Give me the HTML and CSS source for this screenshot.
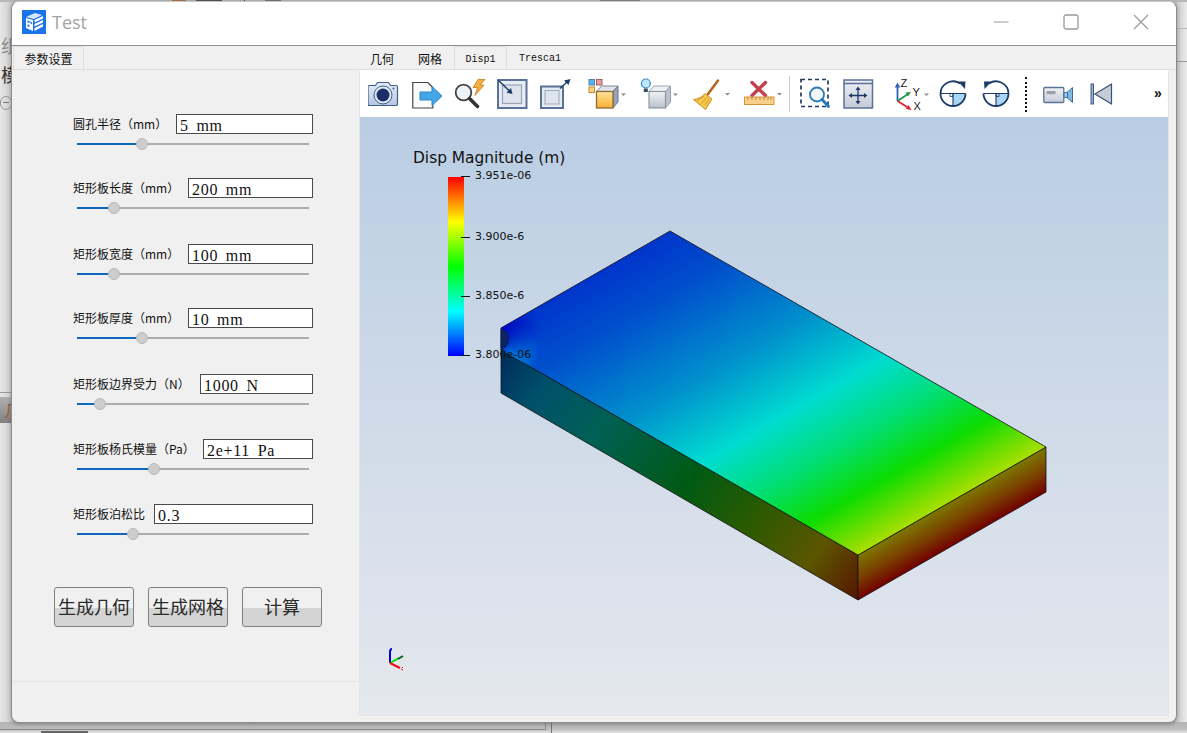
FILE: index.html
```html
<!DOCTYPE html>
<html lang="zh-CN">
<head>
<meta charset="utf-8">
<title>Test</title>
<link rel="stylesheet" href="styles.css">
</head>
<body>
<div class="desktop">
  <i class="mark m1"></i><i class="mark m2"></i><i class="mark m3"></i><i class="mark m4"></i><i class="mark m5"></i>
  <span class="bg-text zu">组</span>
  <span class="bg-text mo">模</span>
  <span class="bg-circle"></span>
  <span class="bg-line bl1"></span>
  <span class="bg-tab">几</span>
  <span class="bg-line bl2"></span>
  <span class="bg-line bl3"></span>
  <span class="bg-line bl4"></span>
  <span class="bg-line bl5"></span>
  <span class="bg-line bl6"></span>
  <span class="bg-rect"></span>

  <div class="window">
    <header class="titlebar">
      <svg class="logo" width="24" height="24" viewBox="0 0 24 24">
        <rect width="24" height="24" fill="#1a73e8"/>
        <path d="M4 7 13 3l7 2-8 4z" fill="#d5e6fb"/>
        <path d="M4 8l7 2v11l-7-3z" fill="#fff"/>
        <path d="M12.500 10 21 6v2.500l-8.500 4zM12.500 14 21 10v2.500l-8.500 4zM12.500 18 21 14v2.500L12.500 21z" fill="#fff"/>
        <path d="M5.500 10.500l2 .6v2l-2-.6zM8.500 11.500l1.500.4v2l-1.500-.4zM5.500 14.500l2 .6v2l-2-.6z" fill="#1a73e8"/>
      </svg>
      <span class="app-name">Test</span>
      <div class="win-controls">
        <svg width="16" height="16" viewBox="0 0 16 16"><path d="M0.500 8h15" stroke="#999" fill="none"/></svg>
        <svg width="16" height="16" viewBox="0 0 16 16"><rect x="1" y="1" width="14" height="14" rx="2" stroke="#999" stroke-width="1.300" fill="none"/></svg>
        <svg width="16" height="16" viewBox="0 0 16 16"><path d="M1 1l14 14M15 1 1 15" stroke="#999" stroke-width="1.200" fill="none"/></svg>
      </div>
    </header>

    <div class="client">
      <aside class="side">
        <div class="tabbar side-tabs"><span class="tab tab-on">参数设置</span></div>
        <div class="pane">
          <div class="params">
            <div class="param"><div class="param-top"><label class="param-label">圆孔半径（mm）</label><input class="field" value="5 mm" readonly></div><div class="slider"><div class="fill" style="width:65px"></div><div class="knob" style="left:65px"></div></div></div>
            <div class="param"><div class="param-top"><label class="param-label">矩形板长度（mm）</label><input class="field" value="200 mm" readonly></div><div class="slider"><div class="fill" style="width:37px"></div><div class="knob" style="left:37px"></div></div></div>
            <div class="param"><div class="param-top"><label class="param-label">矩形板宽度（mm）</label><input class="field" value="100 mm" readonly></div><div class="slider"><div class="fill" style="width:37px"></div><div class="knob" style="left:37px"></div></div></div>
            <div class="param"><div class="param-top"><label class="param-label">矩形板厚度（mm）</label><input class="field" value="10 mm" readonly></div><div class="slider"><div class="fill" style="width:65px"></div><div class="knob" style="left:65px"></div></div></div>
            <div class="param"><div class="param-top"><label class="param-label">矩形板边界受力（N）</label><input class="field" value="1000 N" readonly></div><div class="slider"><div class="fill" style="width:23px"></div><div class="knob" style="left:23px"></div></div></div>
            <div class="param"><div class="param-top"><label class="param-label">矩形板杨氏模量（Pa）</label><input class="field" value="2e+11 Pa" readonly></div><div class="slider"><div class="fill" style="width:77px"></div><div class="knob" style="left:77px"></div></div></div>
            <div class="param"><div class="param-top"><label class="param-label">矩形板泊松比</label><input class="field" value="0.3" readonly></div><div class="slider"><div class="fill" style="width:56px"></div><div class="knob" style="left:56px"></div></div></div>
          </div>
          <div class="actions">
            <button class="btn">生成几何</button>
            <button class="btn">生成网格</button>
            <button class="btn">计算</button>
          </div>
        </div>
      </aside>

      <main class="main">
        <div class="tabbar main-tabs">
          <span class="tab-plain">几何</span>
          <span class="tab-plain tab-last">网格</span>
          <span class="tab tab-mono">Disp1</span>
          <span class="tab-plain tab-mono-plain">Tresca1</span>
        </div>

        <div class="stage">
        <div class="toolbar">
          <!-- camera -->
          <svg class="tool" width="44" height="32" viewBox="0 0 44 32">
            <defs><linearGradient id="cam" x1="0" y1="0" x2="0" y2="1"><stop offset="0" stop-color="#e4ecf6"/><stop offset="1" stop-color="#b4c8e2"/></linearGradient></defs>
            <path d="M1.500 7.500h6l2-3h11l2 3h5.500a1.500 1.500 0 0 1 1.500 1.500v17a1.500 1.500 0 0 1-1.500 1.500h-26.500a1.500 1.500 0 0 1-1.500-1.500v-17a1.500 1.500 0 0 1 1.500-1.500z" fill="url(#cam)" stroke="#3e5f8c" stroke-width="1.200"/>
            <circle cx="15" cy="17" r="9" fill="#dfe8f4" stroke="#3e5f8c"/>
            <circle cx="15" cy="17" r="6.500" fill="#1b2f66"/>
            <circle cx="25.500" cy="10.500" r="1" fill="#3e5f8c"/>
          </svg>
          <!-- export arrow -->
          <svg class="tool" width="42" height="32" viewBox="0 0 42 32">
            <path d="M.800 4.500h15l5 5v20.500h-20z" fill="#fafafa" stroke="#444" stroke-width="1.200"/>
            <path d="M8 14h12v-5.500l10 9.500-10 9.500v-5.500h-12z" fill="#45a6e6" stroke="#2e86c6"/>
          </svg>
          <!-- lens with lightning -->
          <svg class="tool" width="43" height="32" viewBox="0 0 43 32">
            <circle cx="9.500" cy="14.500" r="7.800" fill="#eef2f6" stroke="#444" stroke-width="1.800"/>
            <path d="M15.500 20.500l8 8" stroke="#333" stroke-width="3.500" stroke-linecap="round"/>
            <path d="M24 1.500h7l-5 5.500h4l-9 10.500 2.500-8h-4.500z" fill="#f4b03e" stroke="#c8781c" stroke-width=".8"/>
          </svg>
          <!-- zoom to box in -->
          <svg class="tool" width="43" height="32" viewBox="0 0 43 32">
            <rect x="1" y="2" width="28.500" height="28" fill="#e8edf3" stroke="#5a7296" stroke-width="2"/>
            <rect x="5.500" y="7" width="19" height="18.500" fill="#dfe4ec" stroke="#97a6b8" stroke-width="1.200"/>
            <path d="M1.500 2.500l12 11.500" stroke="#1e3a68" stroke-width="1.400"/>
            <path d="M15.500 16l-1.500-6-4.500 4.500z" fill="#1e3a68"/>
          </svg>
          <!-- zoom out box -->
          <svg class="tool" width="48" height="32" viewBox="0 0 48 32">
            <rect x="1" y="8.500" width="22" height="21.500" fill="#e6ebf1" stroke="#5a7296" stroke-width="2"/>
            <rect x="5" y="12.500" width="14" height="13.500" fill="#dfe4ec" stroke="#97a6b8"/>
            <path d="M20 10.500l7-6.500" stroke="#1e3a68" stroke-width="1.400"/>
            <path d="M30.500 1l-6.500 1.500 4.500 4.500z" fill="#1e3a68"/>
          </svg>
          <!-- representation cube -->
          <svg class="tool" width="52" height="32" viewBox="0 0 52 32">
            <defs><linearGradient id="ora" x1="0" y1="0" x2="0" y2="1"><stop offset="0" stop-color="#ffe49a"/><stop offset="1" stop-color="#fbb030"/></linearGradient></defs>
            <rect x="1" y="1.500" width="5.500" height="5.500" fill="#5ab4ea" stroke="#4a86b0"/>
            <rect x="8.500" y="1.500" width="5.500" height="5.500" fill="#e79ea0" stroke="#a06064"/>
            <rect x="1" y="9" width="5.500" height="5.500" fill="#fbd07c" stroke="#c88a30"/>
            <path d="M8.500 13.500l5-5.500h16.500l-5 5.500z" fill="#e0e3ea" stroke="#7b8898"/>
            <path d="M25 13.500l5-5.500v16l-5 6z" fill="#97a3b6" stroke="#6a7888"/>
            <rect x="8.500" y="13.500" width="16.500" height="16.500" fill="url(#ora)" stroke="#8a6a3c" stroke-width="1.300"/>
            <path d="M33 15.500h5l-2.500 2.500z" fill="#8a8a8a"/>
          </svg>
          <!-- lamp cube -->
          <svg class="tool" width="53" height="32" viewBox="0 0 53 32">
            <defs><linearGradient id="gry" x1="0" y1="0" x2="0" y2="1"><stop offset="0" stop-color="#f2f3f6"/><stop offset="1" stop-color="#b9bfca"/></linearGradient></defs>
            <path d="M9 13.500l5-5.500h16.500l-5 5.500z" fill="#eef0f4" stroke="#98a3b2"/>
            <path d="M25.500 13.500l5-5.500v16l-5 6z" fill="#bcc3cf" stroke="#98a3b2"/>
            <rect x="9" y="13.500" width="16.500" height="16.500" fill="url(#gry)" stroke="#8a96a6" stroke-width="1.200"/>
            <circle cx="5.800" cy="5.500" r="4.500" fill="#bfe6fb" stroke="#3f8cc8" stroke-width="1.200"/>
            <rect x="3.800" y="10.500" width="4" height="3.500" fill="#3c4c60"/>
            <path d="M33 15.500h5l-2.500 2.500z" fill="#8a8a8a"/>
          </svg>
          <!-- broom -->
          <svg class="tool" width="51" height="32" viewBox="0 0 51 32">
            <path d="M25 2.500 15 16" stroke="#b5651d" stroke-width="2.600" stroke-linecap="round"/>
            <path d="M12 15.500l7 5.500-6.500 10.500-12-10c5-.5 9-2.500 11.500-6z" fill="#f6c94e" stroke="#cd8a20"/>
            <path d="M14 19l-6 7M16 21l-4 6M11 18l-7 5" stroke="#cd8a20" stroke-width=".8" fill="none"/>
            <path d="M32 15h5l-2.500 2.500z" fill="#8a8a8a"/>
          </svg>
          <!-- ruler X -->
          <svg class="tool" width="45" height="32" viewBox="0 0 45 32">
            <path d="M8 4.500l13.500 13M21.500 4.500 8 17.500" stroke="#c4404c" stroke-width="3.400" stroke-linecap="round" fill="none"/>
            <rect x=".5" y="19" width="29.500" height="7.500" fill="#f8d08a" stroke="#d4943c"/>
            <path d="M4 19v3M8 19v3M12 19v3M16 19v3M20 19v3M24 19v3M27 19v3" stroke="#b07a30" stroke-width=".8"/>
            <path d="M33 15h5l-2.500 2.500z" fill="#8a8a8a"/>
          </svg>
          <span class="tb-sep"></span>
          <!-- dashed zoom -->
          <svg class="tool" width="43" height="32" viewBox="0 0 43 32">
            <rect x="1" y="1.500" width="27" height="27" fill="none" stroke="#23385f" stroke-width="1.700" stroke-dasharray="4 3"/>
            <circle cx="17" cy="16.500" r="7" fill="#f3f8fc" stroke="#2a7ab5" stroke-width="1.800"/>
            <path d="M22 21.500l6.500 7" stroke="#2a7ab5" stroke-width="3" stroke-linecap="round"/>
          </svg>
          <!-- center -->
          <svg class="tool" width="50" height="32" viewBox="0 0 50 32">
            <defs><linearGradient id="ctr" x1="0" y1="0" x2="0" y2="1"><stop offset="0" stop-color="#eef0f4"/><stop offset="1" stop-color="#c4cad7"/></linearGradient></defs>
            <rect x="1" y="2" width="28.500" height="28" fill="url(#ctr)" stroke="#5a7296" stroke-width="1.500"/>
            <path d="M1 5.500h28.500" stroke="#5a7296" stroke-width="1.500"/>
            <path d="M15 11v13M8 17.500h14" stroke="#1e3a68" stroke-width="1.300"/>
            <path d="M15 8.500l-2.500 3.500h5zM15 26.500l-2.500-3.500h5zM5.500 17.500l3.500-2.500v5zM24.500 17.500l-3.500-2.500v5z" fill="#1e3a68"/>
          </svg>
          <!-- axes -->
          <svg class="tool" width="46" height="36" viewBox="0 0 46 36">
            <path d="M4.500 23V8" stroke="#2c62b8" stroke-width="1.800"/><path d="M4.500 4.500l-2.800 5h5.600z" fill="#2c62b8"/>
            <path d="M4.500 23 15 16" stroke="#1f9a42" stroke-width="1.800"/><path d="M18 14l-5.500 .5 2.500 4z" fill="#1f9a42"/>
            <path d="M4.500 23 15 29.500" stroke="#e0222a" stroke-width="1.800"/><path d="M18.500 32l-3-5-2.500 4z" fill="#e0222a"/>
            <text class="axis-t" x="7.500" y="9">Z</text>
            <text class="axis-t" x="19.500" y="17.500">Y</text>
            <text class="axis-t" x="20.500" y="32">X</text>
            <path d="M31 15.500h5l-2.500 2.500z" fill="#8a8a8a"/>
          </svg>
          <!-- rotate cw -->
          <svg class="tool" width="43" height="32" viewBox="0 0 43 32">
            <path d="M14 15.500h12.500a12.500 12.500 0 0 1-12.500 12.500z" fill="#a8d6f4"/>
            <path d="M1.500 15.500h25M14 15.500v12.500" stroke="#1e3a68" stroke-width="1.100" fill="none"/>
            <path d="M11 15.500h3v3h-3z" fill="none" stroke="#1e3a68" stroke-width=".8"/>
            <path d="M21 5.500a12.500 12.500 0 0 0-19.500 10a12.500 12.500 0 0 0 25 0" fill="none" stroke="#1e3a68" stroke-width="1.800"/>
            <path d="M19 3.500h7.500l-.5 7.500z" fill="#1e3a68"/>
          </svg>
          <!-- rotate ccw -->
          <svg class="tool" width="43" height="32" viewBox="0 0 43 32">
            <path d="M14 15.500h12.500a12.500 12.500 0 0 1-12.500 12.500z" fill="#a8d6f4"/>
            <path d="M1.500 15.500h25M14 15.500v12.500" stroke="#1e3a68" stroke-width="1.100" fill="none"/>
            <path d="M14 15.500h3v3h-3z" fill="none" stroke="#1e3a68" stroke-width=".8"/>
            <path d="M7 5.500a12.500 12.500 0 0 1 19.500 10a12.500 12.500 0 0 1-25 0" fill="none" stroke="#1e3a68" stroke-width="1.800"/>
            <path d="M9.500 3.500h-7.500l.5 7.500z" fill="#1e3a68"/>
          </svg>
          <span class="tb-dots"></span>
          <!-- video -->
          <svg class="tool" width="47" height="32" viewBox="0 0 47 32">
            <defs><linearGradient id="vid" x1="0" y1="0" x2="0" y2="1"><stop offset="0" stop-color="#f0f2f6"/><stop offset="1" stop-color="#c6ccd8"/></linearGradient></defs>
            <rect x=".8" y="9.500" width="20" height="15" rx="1" fill="url(#vid)" stroke="#5a7296" stroke-width="1.300"/>
            <rect x="3.500" y="13" width="9" height="3.200" fill="#9aa0aa"/>
            <path d="M21 15l3.500-1v6l-3.500-1z" fill="#9fd0ee" stroke="#3a6a9a"/>
            <path d="M24.500 14l5-4.500v15l-5-4.500z" fill="#7fbce4" stroke="#3a6a9a"/>
          </svg>
          <!-- previous -->
          <svg class="tool" width="64" height="32" viewBox="0 0 64 32">
            <rect x="1" y="6" width="2.500" height="20" fill="#8fb0d4" stroke="#35507a" stroke-width=".9"/>
            <path d="M5 16 21.500 6v20z" fill="#c5ccd8" stroke="#35507a" stroke-width="1.200"/>
          </svg>
          <span class="more">»</span>
        </div>

        <div class="viewport">
          <svg class="scene" width="808" height="598" viewBox="360 117 808 598">
            <defs>
              <linearGradient id="jet" x1="0" y1="0" x2="0" y2="1">
                <stop offset="0" stop-color="#ff0000"/><stop offset=".25" stop-color="#ffff00"/><stop offset=".5" stop-color="#00ff00"/><stop offset=".75" stop-color="#00ffff"/><stop offset="1" stop-color="#0000ff"/>
              </linearGradient>
              <linearGradient id="topf" gradientUnits="userSpaceOnUse" x1="0" y1="0" x2="1" y2="0" gradientTransform="matrix(376 216 -188 108 670 231)">
                <stop offset="0" stop-color="#0034cc"/><stop offset=".15" stop-color="#0050cc"/><stop offset=".38" stop-color="#0090cc"/><stop offset=".58" stop-color="#00dcd0"/><stop offset=".72" stop-color="#00de7a"/><stop offset=".86" stop-color="#0cdc00"/><stop offset="1" stop-color="#aadf00"/>
              </linearGradient>
              <linearGradient id="frontf" gradientUnits="userSpaceOnUse" x1="510" y1="345" x2="850" y2="610">
                <stop offset="0" stop-color="#002c5c"/><stop offset=".12" stop-color="#00506a"/><stop offset=".28" stop-color="#006055"/><stop offset=".52" stop-color="#005a14"/><stop offset=".7" stop-color="#2c5a00"/><stop offset=".86" stop-color="#5c5500"/><stop offset="1" stop-color="#561400"/>
              </linearGradient>
              <linearGradient id="rightf" gradientUnits="userSpaceOnUse" x1="0" y1="0" x2="1" y2="0" gradientTransform="matrix(0 45 188 -108 858 555)">
                <stop offset="0" stop-color="#7c7800"/><stop offset=".5" stop-color="#7a4200"/><stop offset="1" stop-color="#720000"/>
              </linearGradient>
              <radialGradient id="glowd" gradientUnits="userSpaceOnUse" cx="503" cy="328" r="36">
                <stop offset="0" stop-color="#0008c0"/><stop offset="1" stop-color="#0008c0" stop-opacity="0"/>
              </radialGradient>
              <radialGradient id="glowl" gradientUnits="userSpaceOnUse" cx="510" cy="353" r="30">
                <stop offset="0" stop-color="#0090dc"/><stop offset="1" stop-color="#0090dc" stop-opacity="0"/>
              </radialGradient>
            </defs>

            <rect x="448" y="177" width="16" height="179" fill="url(#jet)"/>
            <path d="M461 176.500h9M461 237.500h9M461 296.500h9M461 355.500h9" stroke="#111" stroke-width="1"/>

            <path d="M501 350 858 555v45L501 393z" fill="url(#frontf)" stroke="#111" stroke-width=".8" stroke-linejoin="round"/>
            <path d="M858 555 1046 447v45L858 600z" fill="url(#rightf)" stroke="#111" stroke-width=".8" stroke-linejoin="round"/>
            <path d="M670 231 1046 447 858 555 501 350V328z" fill="url(#topf)" stroke="#111" stroke-width=".8" stroke-linejoin="round"/>
            <path d="M670 231 1046 447 858 555 501 350V328z" fill="url(#glowl)"/>
            <path d="M670 231 1046 447 858 555 501 350V328z" fill="url(#glowd)"/>
            <path d="M501 329c5 1 7.500 5 7.500 10 0 5-3 9-7.500 11z" fill="#0a2466" stroke="#0b1a40" stroke-width=".8"/>

            <g class="mini">
              <path d="M390 663v-11c0-2 1-3 2-3" stroke="#0000e0" stroke-width="2" fill="none"/>
              <path d="M390 663l9-5" stroke="#00e000" stroke-width="2"/>
              <path d="M398 659l5-3" stroke="#0a5a20" stroke-width="2"/>
              <path d="M390 663l10 5" stroke="#ee1010" stroke-width="2"/>
              <path d="M401 669l2 1M402 667l1 1" stroke="#ee1010" stroke-width="1"/>
            </g>
          </svg>
          <div class="legend-title">Disp Magnitude (m)</div>
          <div class="legend-val v1">3.951e-06</div>
          <div class="legend-val v2">3.900e-6</div>
          <div class="legend-val v3">3.850e-6</div>
          <div class="legend-val v4">3.800e-06</div>
        </div>
        </div>
      </main>
    </div>
  </div>
</div>
</body>
</html>
```
FILE: styles.css
```css
* { box-sizing: border-box; }
html, body { margin: 0; padding: 0; height: 100%; overflow: hidden; }
body { font-family: "Noto Sans CJK SC", "Liberation Sans", sans-serif; font-size: 12px; color: #111; }

.desktop {
  position: relative;
  width: 1187px;
  height: 733px;
  overflow: hidden;
  background:
    linear-gradient(180deg, #b8b8b8 0, #b8b8b8 2px, transparent 2px, transparent 722px, #b4b4b4 722px, #bdbdbd 729px, #e2e2e2 733px),
    linear-gradient(90deg, #e6e6e6 0, #cfcfcf 11px, #bdbdbd 14px, #bdbdbd 1174px, #cfcfcf 1178px, #ececec 1187px);
}
.mark { position: absolute; top: 0; height: 2px; background: #555; }
.m1 { left: 172px; width: 14px; background: #a87850; }
.m2 { left: 196px; width: 26px; }
.m3 { left: 244px; width: 1px; }
.m4 { left: 265px; width: 16px; background: #777; }
.m5 { left: 600px; width: 40px; background: #888; }
.bg-text { position: absolute; left: 1px; font-size: 18px; line-height: 20px; color: #333; }
.zu { top: 35px; color: #8a8a8a; }
.mo { top: 64px; }
.bg-circle { position: absolute; left: 0; top: 96px; width: 12px; height: 14px; border: 1px solid #999; border-radius: 7px; }
.bg-circle::after { content: ""; position: absolute; left: 2px; top: 5px; width: 6px; height: 1px; background: #777; }
.bg-line { position: absolute; background: #999; }
.bl1 { left: 0; top: 392px; width: 12px; height: 1px; }
.bg-tab { position: absolute; left: 0; top: 397px; width: 12px; height: 26px; padding-left: 4px; background: linear-gradient(#b0b0b0, #808080); font-size: 16px; line-height: 26px; color: #a06030; white-space: nowrap; }
.bl2 { left: 0; top: 729px; width: 545px; height: 1px; background: #8a8a8a; }
.bl3 { left: 545px; top: 722px; width: 1px; height: 8px; background: #8a8a8a; }
.bl4 { left: 551px; top: 722px; width: 1px; height: 11px; background: #777; }
.bl5 { left: 1177px; top: 28px; width: 10px; height: 1px; background: #bbb; }
.bl6 { left: 1177px; top: 61px; width: 10px; height: 1px; background: #999; }
.bg-rect { position: absolute; left: 41px; top: 731px; width: 47px; height: 2px; background: #999; border: 1px solid #666; }

.window {
  position: absolute;
  left: 11px;
  top: 1px;
  width: 1166px;
  height: 722px;
  display: flex;
  flex-direction: column;
  background: #f0f0f0;
  border: 1px solid #8b8b8b;
  border-top-color: #c8c8c8;
  border-radius: 8px;
  overflow: hidden;
  box-shadow: 0 1px 4px rgba(0, 0, 0, .3);
}

.titlebar {
  flex: none;
  display: flex;
  align-items: center;
  height: 44px;
  padding: 0 27px 3px 10px;
  background: #fff;
  border-bottom: 1px solid #8f8f98;
}
.logo { flex: none; }
.app-name { margin-left: 6px; font-family: "Open Sans", "Liberation Sans", sans-serif; font-size: 18px; color: #a3a3a3; }
.win-controls { margin-left: auto; display: flex; gap: 54px; }

.client { flex: 1; display: flex; min-height: 0; }

.side { flex: none; width: 347px; display: flex; flex-direction: column; }
.tabbar { flex: none; height: 24px; display: flex; align-items: flex-end; border-bottom: 1px solid #dedede; }
.side-tabs { padding-left: 1px; }
.tab { height: 23px; display: flex; align-items: center; border: 1px solid #dedede; border-bottom: 0; background: #f0f0f0; }
.tab-on { width: 71px; justify-content: center; font-size: 12px; color: #111; }

.pane { height: 612px; padding: 44px 0 0 42px; border-bottom: 1px solid #e4e4e4; display: flex; flex-direction: column; }
.params { margin-left: 19px; width: 240px; }
.param { height: 40px; }
.param:nth-child(2) { margin-top: 24px; }
.param:nth-child(3) { margin-top: 26px; }
.param:nth-child(4) { margin-top: 24px; }
.param:nth-child(5) { margin-top: 26px; }
.param:nth-child(6) { margin-top: 25px; }
.param:nth-child(7) { margin-top: 25px; }
.param-top { display: flex; align-items: center; height: 20px; }
.param-label { flex: none; font-size: 12px; line-height: 18px; padding-bottom: 1px; color: #111; white-space: nowrap; overflow: hidden; }
.param:nth-child(1) .param-label { width: 103px; }
.param:nth-child(2) .param-label,
.param:nth-child(3) .param-label,
.param:nth-child(4) .param-label { width: 115px; }
.param:nth-child(5) .param-label { width: 127px; }
.param:nth-child(6) .param-label { width: 130px; }
.param:nth-child(7) .param-label { width: 81px; }
.field {
  flex: 1;
  min-width: 0;
  height: 20px;
  padding: 3px 3px 0;
  border: 1px solid #4a4a4a;
  border-radius: 0;
  outline: 0;
  background: #fff;
  font-family: "Liberation Serif", serif;
  font-size: 16px;
  letter-spacing: .7px;
  word-spacing: 3px;
  color: #111;
}
.slider { position: relative; margin: 9px 4px 0; width: 232px; height: 2px; background: #acacac; }
.fill { height: 2px; background: #1068bc; }
.knob { position: absolute; top: -5px; width: 12px; height: 12px; margin-left: -6px; border-radius: 50%; background: #cdcdcd; border: 1px solid #b8b8b8; }

.actions { display: flex; gap: 14px; margin-top: 43px; }
.btn {
  width: 80px;
  height: 40px;
  padding: 0 0 3px;
  border: 1px solid #808080;
  border-radius: 3px;
  background: linear-gradient(#f0f0f0 0, #f0f0f0 52%, #d4d4d4 52%, #d4d4d4 100%);
  font-family: "Noto Sans CJK SC", sans-serif;
  font-size: 18px;
  color: #2a2a2a;
}

.main { flex: 1; min-width: 0; display: flex; flex-direction: column; }
.main-tabs { padding-left: 11px; }
.tab-plain { height: 23px; padding-top: 2px; display: flex; align-items: center; font-size: 12px; color: #111; margin-right: 24px; }
.tab-last { margin-right: 12px; }
.tab-mono { width: 53px; padding-top: 2px; justify-content: center; font-family: "Liberation Mono", monospace; font-size: 10px; margin-right: 12px; color: #111; }
.tab-mono-plain { font-family: "Liberation Mono", monospace; font-size: 10px; }

.stage { flex: none; width: 810px; height: 646px; border: 1px solid #e6e6e6; border-top: 0; }
.toolbar { height: 47px; display: flex; align-items: flex-start; padding: 8px 0 0 8px; background: #fff; }
.tool { flex: none; display: block; }
.tb-sep { flex: none; width: 1px; height: 36px; margin: -2px 10px 0 0; background: #cfcfcf; }
.tb-dots { flex: none; width: 0; height: 35px; margin: -1px 16px 0 0; border-left: 2px dotted #111; }
.axis-t { font-family: "Liberation Sans", sans-serif; font-size: 11px; fill: #222; }
.more { flex: none; margin-top: 7px; font-family: "Liberation Sans", sans-serif; font-size: 14px; line-height: 16px; font-weight: 700; color: #111; }

.viewport {
  position: relative;
  height: 598px;
  background: linear-gradient(#b9cde3, #e5e8ee);
  overflow: hidden;
}
.scene { position: absolute; left: 0; top: 0; display: block; }
.legend-title { position: absolute; left: 53px; top: 32px; font-family: "DejaVu Sans", sans-serif; font-size: 15.400px; line-height: 18px; color: #111; white-space: nowrap; }
.legend-val { position: absolute; left: 115px; font-family: "DejaVu Sans", sans-serif; font-size: 11px; line-height: 14px; color: #111; white-space: nowrap; }
.v1 { top: 52px; }
.v2 { top: 113px; }
.v3 { top: 172px; }
.v4 { top: 231px; }
```
